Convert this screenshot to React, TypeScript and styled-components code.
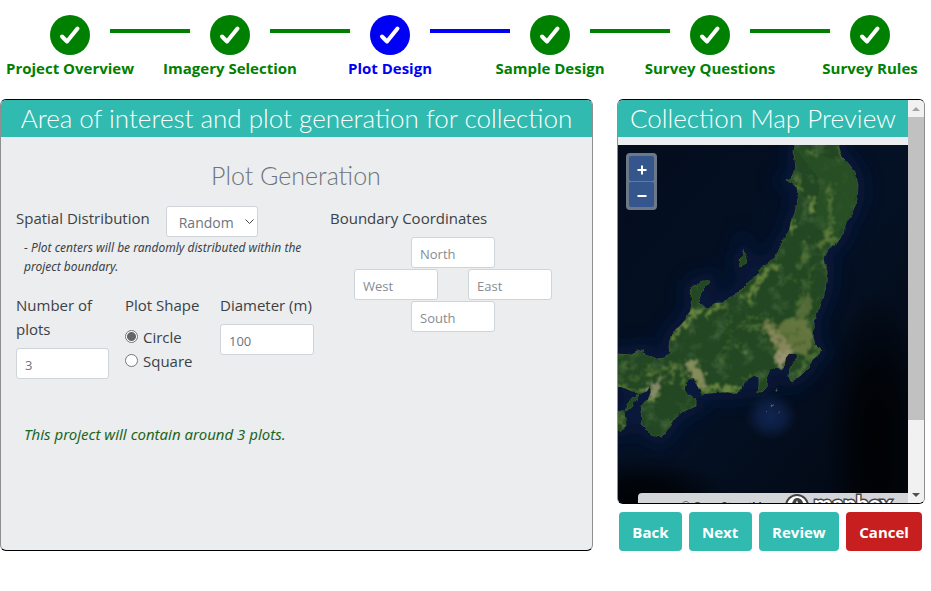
import React, { useState } from "react";
import styled, { createGlobalStyle } from "styled-components";

const GlobalStyle = createGlobalStyle`
  *, *::before, *::after { box-sizing: border-box; }
  body {
    margin: 0;
    background: #fff;
    color: #3b4146;
    font-family: "Open Sans", "Noto Sans", sans-serif;
    font-size: 15px;
    line-height: 24px;
  }
  button, input, select { font: inherit; }
`;

const Page = styled.div`
  min-height: 100vh;
  overflow-x: clip;
`;

const Steps = styled.ol`
  display: grid;
  grid-template-columns: repeat(6, minmax(0, 1fr));
  list-style: none;
  margin: 0 -19px 0 -10px;
  padding: 15px 0 18px;
`;

const Step = styled.li<{ $color: string }>`
  color: ${(p) => p.$color};
  font-weight: 700;
  text-align: center;
  white-space: nowrap;
`;

const Marker = styled.div`
  display: grid;
  grid-template-columns: minmax(0, 1fr) 40px minmax(0, 1fr);
  height: 40px;
`;

const Disc = styled.span`
  grid-column: 2;
  display: grid;
  place-items: center;
  height: 40px;
  border-radius: 50%;
  background: currentColor;
`;

const Connector = styled.span`
  width: 80px;
  height: 4px;
  margin: 14px 0 0 20px;
  background: currentColor;
`;

const StepName = styled.div`
  line-height: 26px;
`;

const Panels = styled.main`
  display: grid;
  grid-template-columns: minmax(0, 593fr) minmax(0, 308fr);
  column-gap: 24px;
  padding-right: 6px;
`;

const Card = styled.section`
  border: 1px solid #000;
  border-left-color: #8d8f91;
  border-right-color: #8d8f91;
  border-radius: 6px;
  background: #ebedef;
  overflow: hidden;
`;

const CardTitle = styled.h1`
  margin: 0;
  background: #31bab0;
  color: #fff;
  font-family: Lato, sans-serif;
  font-size: 26px;
  font-weight: 300;
  line-height: 37px;
  text-align: center;
  white-space: nowrap;
`;

const SectionTitle = styled.h2`
  margin: 0 0 15px;
  color: #6f7478;
  font-family: Lato, sans-serif;
  font-size: 25px;
  font-weight: 300;
  line-height: 32px;
  text-align: center;
`;

const PlotForm = styled.form`
  padding: 22px 16px 16px 15px;
`;

const Columns = styled.div`
  display: grid;
  grid-template-columns: 298px minmax(0, 1fr);
  column-gap: 16px;
`;

const InlineField = styled.div`
  display: flex;
  gap: 16px;
  align-items: flex-start;
`;

const Hint = styled.p`
  margin: 1px 0 17px;
  padding-left: 8px;
  font-family: "Noto Sans", sans-serif;
  font-size: 12px;
  font-style: italic;
  line-height: 19px;
`;

const controlStyle = `
  height: 31px;
  border: 1px solid #ced4da;
  border-radius: 3px;
  background: #fff;
  color: #6c757d;
  font-size: 14px;
`;

const SelectBox = styled.div`
  display: grid;
  align-items: center;
  width: 92px;
  & > * { grid-area: 1 / 1; }
  svg { justify-self: end; margin-right: 4px; pointer-events: none; }
`;

const Select = styled.select`
  ${controlStyle}
  appearance: none;
  width: 100%;
  padding: 2px 12px 0;
`;

const Input = styled.input`
  ${controlStyle}
  width: 100%;
  padding: 2px 8px 0;
  font-size: 13px;
  &::placeholder { color: #868c92; opacity: 1; }
`;

const Trio = styled.div`
  display: grid;
  grid-template-columns: 93px 79px 94px;
  column-gap: 16px;
  align-items: start;
`;

const Field = styled.div`
  display: grid;
  row-gap: 7px;
`;

const ShapeGroup = styled.fieldset`
  margin: 0;
  padding: 0;
  border: 0;
  min-width: 0;
  legend { padding: 0 0 8px; white-space: nowrap; }
`;

const RadioLabel = styled.label`
  display: flex;
  align-items: center;
  gap: 5px;
`;

const Radio = styled.input`
  appearance: none;
  flex: none;
  width: 13px;
  height: 13px;
  margin: 0 0 2px;
  border: 1px solid #767676;
  border-radius: 50%;
  background: #fff;
  &:checked { background: radial-gradient(circle, #666 0 4px, #fff 5px); }
`;

const Compass = styled.div`
  display: grid;
  grid-template-columns: repeat(2, 84px);
  column-gap: 30px;
  row-gap: 1px;
  width: 198px;
  margin: 7px 0 0 24px;
`;

const Pole = styled.div`
  grid-column: 1 / -1;
  justify-self: center;
  width: 84px;
`;

const Summary = styled.p`
  margin: 43px 0 0;
  padding-left: 8px;
  color: #1d661d;
  font-family: "Noto Sans", sans-serif;
  font-style: italic;
`;

const Side = styled.div`
  display: grid;
  grid-template-rows: auto auto;
  align-content: start;
  row-gap: 8px;
`;

const PreviewCard = styled(Card)`
  display: grid;
  grid-template-columns: minmax(0, 1fr) 16px;
  height: calc(100vh - 186px);
  min-height: 260px;
`;

const Preview = styled.div`
  display: grid;
  grid-template-rows: auto minmax(0, 1fr);
  row-gap: 8px;
  min-height: 0;
`;

const MapView = styled.div`
  position: relative;
  min-height: 0;
  overflow: hidden;
  background: #030a17;
  & > svg { display: block; width: 100%; height: 100%; }
`;

const ZoomControls = styled.div`
  position: absolute;
  top: 8px;
  left: 8px;
  display: grid;
  row-gap: 1px;
  padding: 3px;
  border-radius: 4px;
  background: #6c7888;
`;

const ZoomButton = styled.button`
  display: grid;
  place-items: center;
  width: 25px;
  height: 25px;
  padding: 2px 0 0;
  border: 0;
  border-radius: 2px;
  background: #34568d;
  color: #fff;
`;

const Attribution = styled.div`
  position: absolute;
  left: 20px;
  right: 0;
  bottom: -20px;
  display: flex;
  align-items: flex-start;
  justify-content: flex-end;
  gap: 4px;
  height: 30px;
  padding-right: 16px;
  border-radius: 4px 0 0 0;
  background: #d3d5d9;
  color: #333;
`;

const Credit = styled.span`
  margin-right: 5px;
  font-size: 11px;
  line-height: 26px;
`;

const Wordmark = styled.span`
  color: #fff;
  font-family: Lato, sans-serif;
  font-size: 22px;
  font-weight: 700;
  line-height: 22px;
  -webkit-text-stroke: 3px #444;
  paint-order: stroke fill;
`;

const ScrollTrack = styled.div`
  display: grid;
  grid-template-rows: 17px minmax(0, 303fr) minmax(0, 66fr) 17px;
  justify-items: center;
  align-items: center;
  background: #f1f1f1;
`;

const ScrollThumb = styled.div`
  width: 100%;
  height: 100%;
  background: #c1c1c1;
`;

const Arrow = styled.svg`
  grid-column: 1;
  width: 8px;
  height: 4px;
`;

const Actions = styled.div`
  display: grid;
  grid-template-columns: 63fr 63fr 81fr 76fr;
  column-gap: 7px;
  padding: 0 3px 0 2px;
`;

const Action = styled.button<{ $danger?: boolean }>`
  height: 39px;
  padding: 0;
  border: 0;
  border-radius: 4px;
  background: ${(p) => (p.$danger ? "#c71f1f" : "#31bab0")};
  color: #fff;
  font-weight: 700;
`;

const steps = [
  "Project Overview",
  "Imagery Selection",
  "Plot Design",
  "Sample Design",
  "Survey Questions",
  "Survey Rules",
];

const HONSHU =
  "M796 143L793 152L795 160L796 168L793 174L791 179L787 181L792 183L797 188L799 195L797 203L795 213L791 222L789 232L783 241L779 250L775 258L768 264L761 268L756 277L750 281L744 287L737 294L729 298L722 303L714 303L711 308L707 309L702 306L698 302L700 296L703 289L710 281L703 281L697 285L691 287L690 293L693 300L691 309L687 318L681 325L674 331L670 340L669 347L670 354L664 358L658 359L651 357L645 355L643 350L637 351L632 355L616 354V386L625 388L634 392L641 394L647 391L650 386L651 392L648 400L641 406L641 412L642 420L641 424L647 430L655 436L662 437L667 430L673 421L679 414L686 410L696 406L696 400L690 396L684 389L686 383L690 378L694 378L697 386L701 390L701 394L710 393L722 392L737 393L741 388L746 380L753 376L759 377L759 386L757 392L761 393L766 388L767 376L770 370L776 367L782 370L785 365L786 358L792 354L797 357L793 363L790 368L789 376L791 382L797 378L804 373L809 368L812 360L820 353L822 351L815 344L812 333L814 325L815 316L819 308L823 298L827 283L827 270L823 258L827 250L832 246L838 242L843 233L846 222L852 213L857 200L858 185L855 172L848 163L841 156L838 143Z";
const ISLANDS =
  "M744 250L747 257L744 265L740 266L739 260L743 256ZM638 394L636 400L630 408L625 412L627 405L632 398ZM616 411L624 412L626 425L620 432L616 430Z";

function SatelliteMap() {
  return (
    <svg viewBox="618 145 290 358" preserveAspectRatio="xMidYMid slice" role="img" aria-label="Satellite map">
      <defs>
        <linearGradient id="sea" x1="0" y1="0" x2="1" y2="1">
          <stop offset="0" stopColor="#030c1c" />
          <stop offset="0.5" stopColor="#041125" />
          <stop offset="1" stopColor="#02060e" />
        </linearGradient>
        <radialGradient id="trench">
          <stop offset="0" stopColor="#000204" />
          <stop offset="0.4" stopColor="#000204" stopOpacity="0.8" />
          <stop offset="1" stopColor="#000204" stopOpacity="0" />
        </radialGradient>
        <radialGradient id="shoal">
          <stop offset="0" stopColor="#10244f" />
          <stop offset="0.5" stopColor="#0e2149" stopOpacity="0.8" />
          <stop offset="1" stopColor="#0c1d40" stopOpacity="0" />
        </radialGradient>
        <filter id="glow" filterUnits="userSpaceOnUse" x="560" y="90" width="400" height="460">
          <feGaussianBlur stdDeviation="9" />
        </filter>
        <filter id="soft" filterUnits="userSpaceOnUse" x="600" y="130" width="330" height="390">
          <feTurbulence type="fractalNoise" baseFrequency="0.2" numOctaves="3" seed="8" result="n" />
          <feDisplacementMap in="SourceGraphic" in2="n" scale="16" xChannelSelector="R" yChannelSelector="G" result="d" />
          <feGaussianBlur in="d" stdDeviation="0.9" />
        </filter>
        <filter id="coast" filterUnits="userSpaceOnUse" x="600" y="130" width="330" height="390">
          <feTurbulence type="fractalNoise" baseFrequency="0.2" numOctaves="2" seed="3" result="n" />
          <feDisplacementMap in="SourceGraphic" in2="n" scale="4" xChannelSelector="R" yChannelSelector="G" result="d" />
          <feGaussianBlur in="d" stdDeviation="0.5" />
        </filter>
        <filter id="terrain" x="0" y="0" width="100%" height="100%">
          <feTurbulence type="fractalNoise" baseFrequency="0.07" numOctaves="5" seed="14" />
          <feColorMatrix values="0 0 0 0 0.4  0 0 0 0 0.52  0 0 0 0 0.26  2.4 1.2 0 0 -1.8" />
        </filter>
        <clipPath id="land">
          <path d={HONSHU + ISLANDS} />
        </clipPath>
      </defs>
      <rect x="600" y="130" width="330" height="390" fill="url(#sea)" />
      <ellipse cx="876" cy="440" rx="50" ry="150" fill="url(#trench)" />
      <ellipse cx="640" cy="500" rx="90" ry="45" fill="url(#trench)" />
      <path d={HONSHU + ISLANDS} fill="#0c2149" stroke="#0b1e48" strokeWidth="14" opacity="0.65" filter="url(#glow)" />
      <ellipse cx="771" cy="416" rx="26" ry="24" fill="url(#shoal)" />
      <g filter="url(#coast)">
        <path d={HONSHU + ISLANDS} fill="#204720" stroke="#35562a" strokeWidth="1" />
        <path d="M778 412l1 1M771 406l1 -2M766 411l1 0M776 390l1 1" stroke="#4f6654" strokeWidth="2" />
      </g>
      <g clipPath="url(#land)">
        <rect x="617" y="145" width="291" height="359" filter="url(#terrain)" opacity="0.2" />
        <path d="M794 147L850 164L858 188L848 220L832 242L815 218L820 180Z" fill="#2c5526" opacity="0.5" />
        <g filter="url(#soft)" fill="none" stroke="#69853f" strokeLinecap="round" strokeLinejoin="round">
          <path d="M812 149V157M837 145L842 158M797 176L800 193" strokeWidth="3" opacity="0.8" />
          <path d="M813 198L811 211" strokeWidth="5" />
          <path d="M831 184L830 203L831 226L827 242" strokeWidth="3" opacity="0.7" />
          <path d="M824 233L834 241M820 245L827 239" strokeWidth="5" opacity="0.7" />
          <path d="M792 220L791 231" strokeWidth="5" />
          <path d="M807 240L805 255L800 268" strokeWidth="3" opacity="0.7" />
          <path d="M825 255L826 265L828 280" strokeWidth="2" opacity="0.7" />
          <path d="M776 265L766 271L760 281L753 289L750 302" strokeWidth="5" opacity="0.9" />
          <path d="M791 275L793 281M812 267L805 285L798 307" strokeWidth="3" opacity="0.6" />
          <path d="M724 305L713 308L708 314M700 311L694 313L688 322L677 331L674 339" strokeWidth="4" />
          <path d="M726 307L729 333L741 349L750 358M729 342L722 363M761 315L745 321L737 328" strokeWidth="1" />
          <path d="M741 298L752 292M760 325L746 329M758 382L751 376L744 379" strokeWidth="2" />
          <path d="M620 386L634 391L645 389M645 403L654 397L661 391M621 414L622 428" strokeWidth="3" />
          <path d="M647 375L674 365L671 385M684 388L685 375L677 362" strokeWidth="2" />
          <path d="M702 390L716 387L737 391" strokeWidth="5" />
          <path d="M643 371L650 365M632 370L623 363M654 361L649 368M660 380L663 370M630 378L640 380" strokeWidth="2" opacity="0.6" />
          <path d="M799 376L805 363L818 350" strokeWidth="5" opacity="0.6" />
        </g>
        <g filter="url(#soft)">
          <path d="M688 361L698 363L705 377L706 388L699 388L692 377L684 365Z" fill="#8f9260" opacity="0.9" />
          <path d="M646 390L654 384L660 375L659 394L648 402Z" fill="#8f9070" opacity="0.9" />
          <path d="M762 324L770 319L778 328L790 316L802 319L813 330L813 343L806 356L795 353L786 355L782 368L775 367L773 345L764 331Z" fill="#6f7d43" opacity="0.85" />
          <path d="M763 322L777 332L789 343L792 353L781 367L775 363L776 346Z" fill="#958e66" opacity="0.7" />
          <path d="M780 350L789 354L785 363L778 366Z" fill="#a09a7c" opacity="0.8" />
          <path d="M803 297L810 292L813 309L799 327L795 322Z" fill="#667a40" opacity="0.7" />
          <path d="M772 330L780 322M785 335L800 332M793 346L806 342M780 338L774 350" stroke="#36582a" strokeWidth="2" opacity="0.7" />
        </g>
      </g>
      <path d="M786 358L789 354L796 354L797 357L793 362L789 368L785 366Z" fill="#10182c" />
    </svg>
  );
}

export default function App() {
  const [shape, setShape] = useState("circle");
  return (
    <Page>
      <GlobalStyle />
      <Steps>
        {steps.map((name, i) => (
          <Step key={name} $color={name === "Plot Design" ? "#0000f5" : "#008000"}>
            <Marker>
              <Disc>
                <svg width="22" height="20" viewBox="0 0 22 20" aria-hidden="true">
                  <path d="M3 11.5L8 16.5L18.500 3.500" fill="none" stroke="#fff" strokeWidth="4" strokeLinecap="round" strokeLinejoin="round" />
                </svg>
              </Disc>
              {i < steps.length - 1 && <Connector />}
            </Marker>
            <StepName>{name}</StepName>
          </Step>
        ))}
      </Steps>
      <Panels>
        <Card>
          <CardTitle>Area of interest and plot generation for collection</CardTitle>
          <PlotForm>
            <SectionTitle>Plot Generation</SectionTitle>
            <Columns>
              <div>
                <InlineField>
                  <label htmlFor="distribution">Spatial Distribution</label>
                  <SelectBox>
                    <Select id="distribution" defaultValue="random">
                      <option value="random">Random</option>
                      <option value="gridded">Gridded</option>
                    </Select>
                    <svg width="9" height="6" viewBox="0 0 9 6" aria-hidden="true">
                      <path d="M0.5 0.5L4.5 4.5L8.5 0.5" fill="none" stroke="#444" />
                    </svg>
                  </SelectBox>
                </InlineField>
                <Hint>- Plot centers will be randomly distributed within the project boundary.</Hint>
                <Trio>
                  <Field>
                    <label htmlFor="plots">Number of plots</label>
                    <Input id="plots" defaultValue="3" />
                  </Field>
                  <ShapeGroup>
                    <legend>Plot Shape</legend>
                    <RadioLabel>
                      <Radio type="radio" name="shape" checked={shape === "circle"} onChange={() => setShape("circle")} />
                      Circle
                    </RadioLabel>
                    <RadioLabel>
                      <Radio type="radio" name="shape" checked={shape === "square"} onChange={() => setShape("square")} />
                      Square
                    </RadioLabel>
                  </ShapeGroup>
                  <Field>
                    <label htmlFor="diameter">Diameter (m)</label>
                    <Input id="diameter" defaultValue="100" />
                  </Field>
                </Trio>
              </div>
              <div>
                <div id="bounds">Boundary Coordinates</div>
                <Compass role="group" aria-labelledby="bounds">
                  <Pole><Input aria-label="North" placeholder="North" /></Pole>
                  <Input aria-label="West" placeholder="West" />
                  <Input aria-label="East" placeholder="East" />
                  <Pole><Input aria-label="South" placeholder="South" /></Pole>
                </Compass>
              </div>
            </Columns>
            <Summary>This project will contain around 3 plots.</Summary>
          </PlotForm>
        </Card>
        <Side>
          <PreviewCard>
            <Preview>
              <CardTitle>Collection Map Preview</CardTitle>
              <MapView>
                <SatelliteMap />
                <ZoomControls>
                  <ZoomButton aria-label="Zoom in">
                    <svg width="10" height="10" viewBox="0 0 10 10"><path d="M5 0.5V9.5M0.5 5H9.5" stroke="#fff" strokeWidth="2" /></svg>
                  </ZoomButton>
                  <ZoomButton aria-label="Zoom out">
                    <svg width="10" height="10" viewBox="0 0 10 10"><path d="M0.5 5H9.5" stroke="#fff" strokeWidth="2" /></svg>
                  </ZoomButton>
                </ZoomControls>
                <Attribution>
                  <Credit>© OpenStreetMap</Credit>
                  <svg width="26" height="26" viewBox="0 0 26 26" aria-hidden="true">
                    <circle cx="13" cy="13" r="11" fill="#fff" stroke="#444" strokeWidth="2" />
                    <path d="M13 5C17 5 19 8 19 11C19 16 13 19 7 19C7 11 9 5 13 5Z" fill="#444" />
                    <path d="M13 7L14 10L17 11L14 12L13 15L12 12L9 11L12 10Z" fill="#fff" />
                  </svg>
                  <Wordmark>mapbox</Wordmark>
                </Attribution>
              </MapView>
            </Preview>
            <ScrollTrack aria-hidden="true">
              <Arrow viewBox="0 0 8 4"><path d="M0 4L4 0L8 4Z" fill="#a3a3a3" /></Arrow>
              <ScrollThumb />
              <span />
              <Arrow viewBox="0 0 8 4"><path d="M0 0L4 4L8 0Z" fill="#505050" /></Arrow>
            </ScrollTrack>
          </PreviewCard>
          <Actions>
            <Action>Back</Action>
            <Action>Next</Action>
            <Action>Review</Action>
            <Action $danger>Cancel</Action>
          </Actions>
        </Side>
      </Panels>
    </Page>
  );
}
